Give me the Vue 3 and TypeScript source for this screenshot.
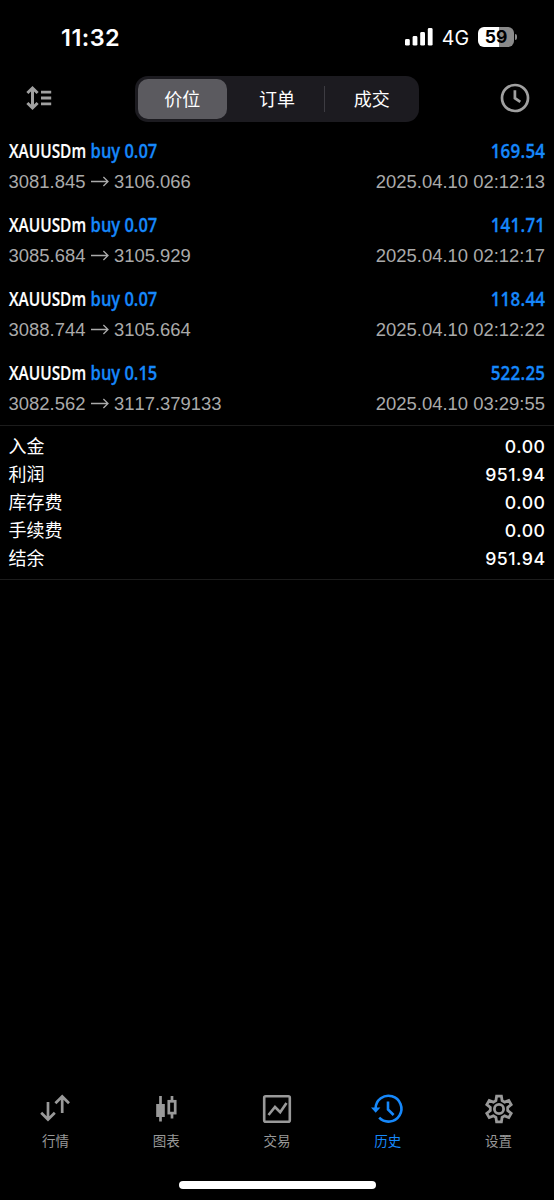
<script setup lang="ts">
interface Deal {
  symbol: string
  side: string
  open: string
  close: string
  profit: string
  time: string
}

const segments: string[] = ['价位', '订单', '成交']

const deals: Deal[] = [
  { symbol: 'XAUUSDm', side: 'buy 0.07', open: '3081.845', close: '3106.066', profit: '169.54', time: '2025.04.10 02:12:13' },
  { symbol: 'XAUUSDm', side: 'buy 0.07', open: '3085.684', close: '3105.929', profit: '141.71', time: '2025.04.10 02:12:17' },
  { symbol: 'XAUUSDm', side: 'buy 0.07', open: '3088.744', close: '3105.664', profit: '118.44', time: '2025.04.10 02:12:22' },
  { symbol: 'XAUUSDm', side: 'buy 0.15', open: '3082.562', close: '3117.379133', profit: '522.25', time: '2025.04.10 03:29:55' },
]

const totals: { label: string; value: string }[] = [
  { label: '入金', value: '0.00' },
  { label: '利润', value: '951.94' },
  { label: '库存费', value: '0.00' },
  { label: '手续费', value: '0.00' },
  { label: '结余', value: '951.94' },
]
</script>

<template>
  <div class="screen">
    <header class="status">
      <span class="clock">11:32</span>
      <div class="status-right">
        <svg class="signal" width="28" height="18" viewBox="0 0 28 18" fill="#fff">
          <rect x="0" y="11" width="4.8" height="6.6" rx="1.4" />
          <rect x="7.6" y="8" width="4.8" height="9.6" rx="1.4" />
          <rect x="15.2" y="4" width="4.8" height="13.6" rx="1.4" />
          <rect x="22.8" y="0" width="4.8" height="17.6" rx="1.4" />
        </svg>
        <span class="network">4G</span>
        <div class="battery">
          <span class="battery-level">59</span>
          <span class="battery-tip"></span>
        </div>
      </div>
    </header>

    <nav class="toolbar">
      <svg class="sort" width="28" height="24" viewBox="0 0 28 24" fill="none" stroke="#a0a0a0">
        <path d="M6.5 2.4V21.6M1.4 7L6.5 2L11.6 7M1.4 17L6.5 22L11.6 17" stroke-width="3" />
        <path d="M15 6.1H25.2M15 12H25.2M15 17.8H25.2" stroke-width="2.8" />
      </svg>
      <div class="segmented">
        <div v-for="(s, i) in segments" :key="s" class="segment" :class="{ active: i === 0, divided: i === 2 }">{{ s }}</div>
      </div>
      <svg class="period" width="30" height="30" viewBox="0 0 30 30" fill="none" stroke="#a0a0a0" stroke-width="2.7">
        <circle cx="15" cy="15" r="13" />
        <path d="M14.9 7.2V15.2L20.3 18.9" />
      </svg>
    </nav>

    <main>
      <section class="deals">
        <article v-for="d in deals" :key="d.time" class="deal">
          <div class="deal-head">
            <span class="symbol">{{ d.symbol }}</span>
            <span class="side">{{ d.side }}</span>
            <span class="profit">{{ d.profit }}</span>
          </div>
          <div class="deal-foot">
            <span class="prices">
              <span>{{ d.open }}</span>
              <svg class="arrow" width="18" height="11" viewBox="0 0 18 11" fill="none" stroke="#aaa" stroke-width="1.3">
                <path d="M0 5.5H17M12.4 1L17 5.5L12.4 10" />
              </svg>
              <span>{{ d.close }}</span>
            </span>
            <span>{{ d.time }}</span>
          </div>
        </article>
      </section>

      <section class="totals">
        <div v-for="t in totals" :key="t.label" class="total">
          <span>{{ t.label }}</span>
          <span class="amount">{{ t.value }}</span>
        </div>
      </section>
    </main>

    <footer class="tabs">
      <div class="tab">
        <svg width="32" height="32" viewBox="0 0 32 32" fill="none" stroke="currentColor" stroke-width="2.7">
          <path d="M9 8V25M2.2 18.7L9 25.5L15.8 18.7M23.2 19V3M16.4 9.3L23.2 2.5L30 9.3" />
        </svg>
        <span>行情</span>
      </div>
      <div class="tab">
        <svg width="32" height="32" viewBox="0 0 32 32" fill="none" stroke="currentColor" stroke-width="2.7">
          <path d="M10.5 2V27.5M22 2V7M22 19V24.5" />
          <rect x="6.2" y="10" width="8.6" height="13" fill="currentColor" stroke="none" />
          <rect x="18.8" y="7.3" width="6.4" height="11.8" />
        </svg>
        <span>图表</span>
      </div>
      <div class="tab">
        <svg width="32" height="32" viewBox="0 0 32 32" fill="none" stroke="currentColor" stroke-width="2.6">
          <rect x="3.2" y="2.2" width="25.6" height="25.6" rx="1.5" />
          <path d="M7.5 21L14 13L19.2 18.2L25.5 9" />
        </svg>
        <span>交易</span>
      </div>
      <div class="tab current">
        <svg width="32" height="32" viewBox="0 0 32 32" fill="none" stroke="currentColor" stroke-width="2.6">
          <path d="M3.6 14.5A12.9 12.9 0 1 1 7.2 23.6" />
          <path d="M-1 13.6H8.4L3.7 18.8Z" fill="currentColor" stroke="none" />
          <path d="M16 7.6V15.5L21.6 21" />
        </svg>
        <span>历史</span>
      </div>
      <div class="tab">
        <svg width="32" height="32" viewBox="0 0 32 32" fill="none" stroke="currentColor" stroke-width="2.8">
          <path d="M13.6 2.2H18.4L19.1 6.7L21.6 8.1L25.8 6.4L28.2 10.6L24.7 13.5V16.5L28.2 19.4L25.8 23.6L21.6 21.9L19.1 23.3L18.4 27.8H13.6L12.9 23.3L10.4 21.9L6.2 23.6L3.8 19.4L7.3 16.5V13.5L3.8 10.6L6.2 6.4L10.4 8.1L12.9 6.7Z" />
          <circle cx="16" cy="15" r="4.6" />
        </svg>
        <span>设置</span>
      </div>
    </footer>
    <div class="home-bar"></div>
  </div>
</template>

<style>
body {
  margin: 0;
  background: #000;
}
</style>

<style scoped>
.screen {
  width: 554px;
  height: 1200px;
  background: #000;
  color: #fff;
  display: flex;
  flex-direction: column;
  overflow: hidden;
  font-family: "Liberation Sans", "Noto Sans CJK SC", sans-serif;
}

svg {
  display: block;
  overflow: visible;
}

.status {
  height: 74px;
  display: flex;
  justify-content: space-between;
  box-sizing: border-box;
  padding: 0 40px 0 61px;
  align-items: center;
  font-family: Inter, sans-serif;
}

.clock {
  font-size: 23.5px;
  font-weight: 600;
  letter-spacing: 0.45px;
}

.status-right {
  display: flex;
  align-items: center;
}

.network {
  margin: 1px 9px 0 8.5px;
  font-size: 19.6px;
}

.battery {
  position: relative;
  width: 36px;
  height: 20px;
  border-radius: 6px;
  background: linear-gradient(90deg, #fff 59%, #8a8a8a 59%);
  text-align: center;
}

.battery-level {
  display: block;
  color: #000;
  font-size: 17.5px;
  font-weight: 700;
  line-height: 20px;
}

.battery-tip {
  position: absolute;
  left: 37px;
  top: 7px;
  width: 2px;
  height: 6px;
  border-radius: 0 2px 2px 0;
  background: #8a8a8a;
}

.toolbar {
  height: 50px;
  display: flex;
  align-items: center;
  justify-content: space-between;
  box-sizing: border-box;
  padding: 0 24px 0 26px;
}

.sort,
.period {
  margin-bottom: 2px;
}

.segmented {
  width: 284px;
  height: 46px;
  box-sizing: border-box;
  padding: 3px;
  border-radius: 13px;
  background: #1c1b20;
  display: flex;
  gap: 6px;
}

.segment {
  position: relative;
  flex: 1;
  border-radius: 10px;
  font-size: 18px;
  line-height: 42px;
  text-align: center;
}

.segment.active {
  background: #5b5a5f;
}

.segment.divided::before {
  content: "";
  position: absolute;
  left: -3px;
  top: 7px;
  width: 1px;
  height: 26px;
  background: #3d3c42;
}

.deals {
  height: 302px;
  box-sizing: border-box;
  padding: 14px 9px 0 8.5px;
  border-bottom: 1px solid #1c1c1c;
}

.deal {
  height: 74px;
}

/* Condensed heading: laid out wide, then narrowed to the row's width */
.deal-head {
  width: 696px;
  height: 28px;
  display: flex;
  transform: scaleX(0.77);
  transform-origin: left top;
  font-family: "Open Sans", "Noto Sans", sans-serif;
  font-size: 20px;
  font-weight: 600;
  line-height: 26px;
}

.symbol {
  width: 106px;
  -webkit-text-stroke: 0.2px #fff;
}

.side,
.profit {
  color: #1688fb;
  transform: scaleX(1.07);
  transform-origin: left top;
  -webkit-text-stroke: 0.3px #1688fb;
}

.profit {
  margin-left: auto;
  transform: scaleX(1.1);
  transform-origin: right top;
  letter-spacing: 0.3px;
}

.deal-foot {
  height: 32px;
  display: flex;
  justify-content: space-between;
  align-items: center;
  color: #aaa;
  font-size: 18.45px;
  line-height: 32px;
  font-kerning: none;
}

.prices {
  display: flex;
  align-items: center;
}

.arrow {
  margin: 0 5px 2px 5.5px;
}

.totals {
  height: 154px;
  box-sizing: border-box;
  padding: 7px 9px 0 8.5px;
  border-bottom: 1px solid #1c1c1c;
}

.total {
  height: 28px;
  display: flex;
  justify-content: space-between;
  align-items: center;
  font-size: 18px;
  line-height: 28px;
}

.amount {
  font-family: Inter, sans-serif;
  font-weight: 500;
  font-size: 17.7px;
  letter-spacing: 0.5px;
  margin-right: -0.5px;
}

.tabs {
  margin-top: auto;
  display: flex;
  height: 87px;
}

.tab {
  flex: 1;
  display: flex;
  flex-direction: column;
  align-items: center;
  color: #999;
  font-size: 13.5px;
  line-height: 20px;
}

.tab span {
  margin-top: 6px;
}

.tab.current {
  color: #1688fb;
}

.home-bar {
  width: 197px;
  height: 8px;
  margin: 0 auto 11px;
  border-radius: 4px;
  background: #fff;
}
</style>
